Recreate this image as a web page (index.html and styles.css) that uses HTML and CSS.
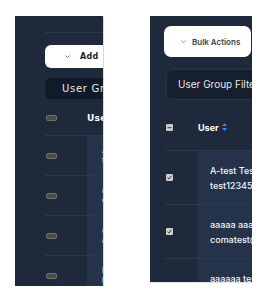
FILE: index.html
```html
<!DOCTYPE html>
<html lang="en">
<head>
    <meta charset="UTF-8">
    <meta name="viewport" content="width=device-width, initial-scale=1.0">
    <title>Users</title>
    <link rel="stylesheet" href="styles.css">
</head>
<body>
    <div class="stage">
        <div class="panel-left">
            <div class="lp-head"></div>
            <div class="lp-btn">
                <svg class="chev" width="5" height="3" viewBox="0 0 5 3"><polyline points="0.5,0.5 2.5,2.5 4.5,0.5" fill="none" stroke="#777" stroke-width="0.9"/></svg>
                <span>Add</span>
            </div>
            <div class="lp-filter">User Group Filter</div>
            <div class="lp-thead">
                <div class="lp-cell-check"><span class="lp-box"></span></div>
                <div class="lp-th">User</div>
            </div>
            <div class="lp-row">
                <div class="lp-cell-check"><span class="lp-box"></span></div>
                <div class="lp-user"><span>A-test Test</span><span>test12345</span></div>
            </div>
            <div class="lp-row">
                <div class="lp-cell-check"><span class="lp-box"></span></div>
                <div class="lp-user"><span>aaaaa aaaa</span><span>comatest</span></div>
            </div>
            <div class="lp-row">
                <div class="lp-cell-check"><span class="lp-box"></span></div>
                <div class="lp-user"><span>aaaaaa test</span><span>aaaa</span></div>
            </div>
            <div class="lp-row">
                <div class="lp-cell-check"><span class="lp-box"></span></div>
                <div class="lp-user"><span>bbbb test</span><span>bbbb</span></div>
            </div>
        </div>

        <div class="panel-right">
            <div class="rp-btn">
                <svg class="chev" width="5" height="3" viewBox="0 0 5 3"><polyline points="0.5,0.5 2.5,2.5 4.5,0.5" fill="none" stroke="#888" stroke-width="0.9"/></svg>
                <span>Bulk Actions</span>
            </div>
            <div class="rp-filter">User Group Filter</div>
            <div class="rp-thead">
                <div class="rp-cell-check">
                    <svg width="7" height="7" viewBox="0 0 7 7"><rect width="7" height="7" rx="1" fill="#c8c8c8"/><rect x="1.5" y="3" width="4" height="1.2" fill="#555"/></svg>
                </div>
                <div class="rp-th">User
                    <svg class="sort" width="5" height="8" viewBox="0 0 5 8"><polygon points="2.5,0 5,3 0,3" fill="#3b82f6"/><polygon points="0,5 5,5 2.5,8" fill="#3b82f6"/></svg>
                </div>
            </div>
            <div class="rp-row">
                <div class="rp-cell-check">
                    <svg width="7" height="7" viewBox="0 0 7 7"><rect width="7" height="7" rx="1" fill="#cfcfcf"/><polyline points="1.6,3.6 2.9,5 5.4,1.8" fill="none" stroke="#333" stroke-width="1"/></svg>
                </div>
                <div class="rp-user"><span>A-test Test User</span><span>test12345@mail.com</span></div>
            </div>
            <div class="rp-row">
                <div class="rp-cell-check">
                    <svg width="7" height="7" viewBox="0 0 7 7"><rect width="7" height="7" rx="1" fill="#cfcfcf"/><polyline points="1.6,3.6 2.9,5 5.4,1.8" fill="none" stroke="#333" stroke-width="1"/></svg>
                </div>
                <div class="rp-user"><span>aaaaa aaaaa</span><span>comatest@mail.com</span></div>
            </div>
            <div class="rp-row">
                <div class="rp-cell-check">
                    <svg width="7" height="7" viewBox="0 0 7 7"><rect width="7" height="7" rx="1" fill="#4a4a4a" stroke="#777" stroke-width="0.8"/></svg>
                </div>
                <div class="rp-user"><span>aaaaaa test</span><span>aaaa@mail.com</span></div>
            </div>
        </div>
    </div>
</body>
</html>
```

FILE: styles.css
```css
body {
    margin: 0;
    background-color: #fff;
    font-family: Inter, "Liberation Sans", sans-serif;
}
.stage {
    display: flex;
    align-items: flex-start;
    gap: 47px;
    padding: 16px 0 0 15px;
}
.chev {
    display: block;
    flex-shrink: 0;
}

/* left panel */
.panel-left {
    width: 88px;
    height: 270px;
    flex-shrink: 0;
    background-color: #1e293b;
    overflow: hidden;
    box-shadow: 1px 1px 0 #d9d9d9;
}
.lp-head {
    margin-left: 30px;
    height: 16px;
    border-bottom: 1px solid #2c394c;
}
.lp-btn {
    margin: 12px 0 0 30px;
    width: 100px;
    height: 23px;
    background-color: #fff;
    border-radius: 6px;
    display: flex;
    align-items: center;
    padding-left: 20px;
    gap: 10px;
    box-sizing: border-box;
    font-family: "DejaVu Sans", sans-serif;
    font-size: 8px;
    font-weight: 600;
    letter-spacing: 0.3px;
    color: #222;
    white-space: nowrap;
}
.lp-filter {
    margin: 10px 0 0 30px;
    width: 110px;
    height: 21px;
    background-color: #111a28;
    border-radius: 6px;
    padding-left: 17px;
    box-sizing: border-box;
    line-height: 21px;
    font-family: "DejaVu Sans", sans-serif;
    font-size: 10px;
    letter-spacing: 0.7px;
    color: #e8e8e8;
    white-space: nowrap;
}
.lp-thead {
    margin-left: 30px;
    height: 37px;
    border-bottom: 1px solid #2c394c;
    display: flex;
    align-items: center;
    padding-top: 2px;
    box-sizing: border-box;
}
.lp-cell-check {
    width: 42px;
    flex-shrink: 0;
    display: flex;
    align-items: center;
}
.lp-box {
    display: block;
    margin-left: 1px;
    width: 9px;
    height: 4px;
    background-color: #4a4a4a;
    border: 1px solid #6e6e6e;
    border-radius: 2px;
}
.lp-th {
    font-family: "DejaVu Sans", sans-serif;
    font-size: 9px;
    font-weight: bold;
    letter-spacing: 0.3px;
    color: #fff;
    white-space: nowrap;
}
.lp-row {
    margin-left: 30px;
    height: 39px;
    border-bottom: 1px solid #2c394c;
    display: flex;
    align-items: stretch;
}
.lp-user {
    flex: 1;
    background-color: #25334a;
    display: flex;
    flex-direction: column;
    padding: 9px 0 0 15px;
    font-size: 8px;
    line-height: 10px;
    color: #f0f0f0;
    white-space: nowrap;
}

/* right panel */
.panel-right {
    width: 102px;
    height: 266px;
    flex-shrink: 0;
    background-color: #1e293b;
    overflow: hidden;
    box-shadow: 0 1px 0 #e3e3e3;
}
.rp-btn {
    margin: 10px 0 0 14px;
    width: 87px;
    height: 31px;
    background-color: #fff;
    border-radius: 7px;
    display: flex;
    align-items: center;
    padding-left: 17px;
    gap: 6px;
    box-sizing: border-box;
    font-size: 8px;
    font-weight: 600;
    color: #374151;
    white-space: nowrap;
}
.rp-filter {
    margin: 12px 0 0 16px;
    width: 110px;
    height: 31px;
    background-color: #161f2d;
    border: 1px solid #283446;
    border-radius: 7px;
    padding-left: 11px;
    box-sizing: border-box;
    line-height: 29px;
    font-size: 10px;
    color: #e5e7eb;
    white-space: nowrap;
}
.rp-thead {
    margin-left: 15px;
    height: 51px;
    border-bottom: 1px solid #2c394c;
    display: flex;
    align-items: center;
    box-sizing: border-box;
    padding-top: 4px;
}
.rp-cell-check {
    width: 33px;
    flex-shrink: 0;
    display: flex;
    align-items: center;
}
.rp-cell-check svg {
    display: block;
    margin-left: 1px;
}
.rp-th {
    display: flex;
    align-items: center;
    gap: 3px;
    font-size: 9px;
    font-weight: bold;
    color: #fff;
}
.rp-row {
    margin-left: 15px;
    height: 54px;
    border-bottom: 1px solid #2c394c;
    box-sizing: border-box;
    display: flex;
    align-items: stretch;
}
.rp-user {
    flex: 1;
    background-color: #25334a;
    display: flex;
    flex-direction: column;
    justify-content: center;
    padding-left: 12px;
    font-size: 9px;
    font-weight: 500;
    line-height: 15px;
    color: #f3f4f6;
    white-space: nowrap;
}
```
